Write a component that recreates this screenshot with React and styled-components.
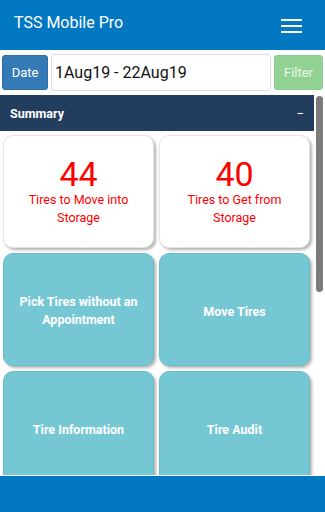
import React from 'react';
import styled, { createGlobalStyle } from 'styled-components';

const GlobalStyle = createGlobalStyle`
  html, body {
    margin: 0;
    padding: 0;
    background: #fff;
    font-family: Roboto, "Liberation Sans", sans-serif;
  }
  * { box-sizing: border-box; }
`;

const Screen = styled.div`
  width: 325px;
  height: 512px;
  display: flex;
  flex-direction: column;
  overflow: hidden;
`;

const Header = styled.header`
  height: 50px;
  flex: none;
  background: #0277c2;
  display: flex;
  align-items: center;
  justify-content: space-between;
  padding: 0 23px 0 14px;
  color: #fff;
`;

const Title = styled.h1`
  margin: 0 0 5px;
  font-size: 16px;
  font-weight: 400;
`;

const Burger = styled.div`
  width: 21px;
  display: flex;
  flex-direction: column;
  gap: 4px;
  margin-top: 1px;

  span {
    display: block;
    height: 2px;
    background: #fff;
  }
`;

const FilterRow = styled.div`
  flex: none;
  display: flex;
  align-items: center;
  gap: 3px;
  padding: 4px 2px 4px 2px;
`;

const Btn = styled.button`
  width: ${p => p.$w}px;
  height: 35px;
  padding: 0;
  border-radius: 3px;
  border: 1px solid ${p => p.$border};
  background: ${p => p.$bg};
  color: ${p => p.$color};
  font-family: inherit;
  font-size: 13px;
  flex: none;
`;

const DateInput = styled.div`
  flex: 1;
  height: 37px;
  border: 1px solid #ddd;
  border-radius: 3px;
  display: flex;
  align-items: center;
  padding-left: 3px;
  font-size: 16px;
  color: #111;
`;

const ScrollRegion = styled.div`
  flex: 1;
  position: relative;
  overflow: hidden;
`;

const ScrollContent = styled.div`
  padding-right: 11px;
`;

const ScrollThumb = styled.div`
  position: absolute;
  top: 1px;
  right: 2px;
  width: 7px;
  height: 196px;
  border-radius: 4px;
  background: #7b7b7b;
`;

const SummaryBar = styled.div`
  height: 36px;
  background: #233d5f;
  color: #fff;
  display: flex;
  align-items: center;
  justify-content: space-between;
  padding: 0 10px 0 10px;
  font-size: 12.5px;
  font-weight: 700;

  span:last-child { font-weight: 400; font-size: 13px; }
`;

const Grid = styled.div`
  display: grid;
  grid-template-columns: 151px 151px;
  column-gap: 5px;
  row-gap: 5px;
  padding: 4px 0 10px 3px;
`;

const Card = styled.div`
  height: 113px;
  border-radius: 10px;
  background: ${p => (p.$stat ? '#fff' : '#76c7d4')};
  border: 1px solid ${p => (p.$stat ? '#e4e4e4' : '#6bbccb')};
  box-shadow: 2px 2px 3px rgba(0, 0, 0, 0.3);
  display: flex;
  flex-direction: column;
  align-items: center;
  justify-content: center;
  text-align: center;
  padding: 0 10px;
`;

const StatNumber = styled.div`
  font-size: 34px;
  line-height: 34px;
  color: #ff0000;
`;

const StatLabel = styled.div`
  font-size: 12.5px;
  line-height: 18px;
  color: #ff0000;
`;

const ActionLabel = styled.div`
  font-size: 12.5px;
  line-height: 18px;
  font-weight: 700;
  color: #fff;
  margin-top: ${p => (p.$lines > 1 ? 2 : 4)}px;
`;

const Footer = styled.footer`
  height: 37px;
  flex: none;
  background: #0277c2;
  border-top: 1px solid #fff;
`;

const stats = [
  { n: 44, label: 'Tires to Move into Storage' },
  { n: 40, label: 'Tires to Get from Storage' },
];

const actions = [
  { label: 'Pick Tires without an Appointment', lines: 2 },
  { label: 'Move Tires', lines: 1 },
  { label: 'Tire Information', lines: 1 },
  { label: 'Tire Audit', lines: 1 },
];

export default function App() {
  return (
    <>
      <GlobalStyle />
      <Screen>
        <Header>
          <Title>TSS Mobile Pro</Title>
          <Burger><span /><span /><span /></Burger>
        </Header>
        <FilterRow>
          <Btn $w={46} $bg="#337ab7" $border="#2e6da4" $color="#fff">Date</Btn>
          <DateInput>1Aug19 - 22Aug19</DateInput>
          <Btn $w={49} $bg="#92d293" $border="#8ccc8d" $color="#e9f6e9">Filter</Btn>
        </FilterRow>
        <ScrollRegion>
          <ScrollContent>
            <SummaryBar>
              <span>Summary</span>
              <span>−</span>
            </SummaryBar>
            <Grid>
              {stats.map(s => (
                <Card $stat key={s.label}>
                  <StatNumber>{s.n}</StatNumber>
                  <StatLabel>{s.label}</StatLabel>
                </Card>
              ))}
              {actions.map(a => (
                <Card key={a.label}>
                  <ActionLabel $lines={a.lines}>{a.label}</ActionLabel>
                </Card>
              ))}
            </Grid>
          </ScrollContent>
          <ScrollThumb />
        </ScrollRegion>
        <Footer />
      </Screen>
    </>
  );
}
